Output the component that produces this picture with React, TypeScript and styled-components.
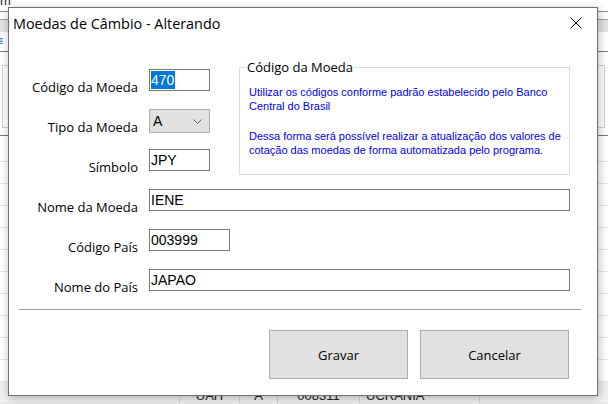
import React from 'react';
import styled, { createGlobalStyle } from 'styled-components';

const ui = '"Open Sans", "Noto Sans", "Liberation Sans", sans-serif';
const classic = '"Liberation Sans", Arial, sans-serif';

const GlobalStyle = createGlobalStyle`
  html, body {
    margin: 0;
    padding: 0;
  }
  body {
    width: 608px;
    height: 404px;
    overflow: hidden;
    background: #fff;
    font-family: ${ui};
  }
`;

const Desktop = styled.div`
  position: relative;
  width: 608px;
  height: 404px;
  overflow: hidden;
  background: #fff;
`;

/* ---------- the list window behind the dialog ---------- */

const BackWindow = styled.div`
  display: flex;
  flex-direction: column;
  height: 100%;
`;

const BackTitle = styled.div`
  height: 12px;
  border-bottom: 1px solid #8a8a8a;
  font: 13px ${classic};
  color: #222;
  line-height: 2px;
  text-indent: -34px;
  overflow: hidden;
`;

const BackMenu = styled.div`
  height: 8px;
  border-bottom: 1px solid #9a9a9a;
`;

const BackToolbar = styled.div`
  height: 31px;
  background: linear-gradient(#e3e3e3 0, #e3e3e3 12px, #fff 12px);
  border-bottom: 1px solid #7c7c7c;
  color: #1565c0;
  font: 12px ${classic};
  line-height: 42px;
  text-indent: -4px;
`;

const BackFilter = styled.div`
  height: 91px;
  border-bottom: 1px solid #7c7c7c;
  padding: 13px 3px 0 2px;
  box-sizing: border-box;
`;

const FilterBox = styled.div`
  height: 63px;
  border: 1px solid #d0d0d0;
  box-sizing: border-box;
`;

const GridHead = styled.div`
  height: 27px;
  border-bottom: 1px solid #e2e2e2;
`;

const GridRow = styled.div<{ $shade?: boolean }>`
  flex: none;
  height: 21px;
  border-bottom: 1px solid #e6e6e6;
  display: flex;
  background: ${(p) => (p.$shade ? '#f0f0f0' : '#fff')};
`;

const GridCell = styled.div<{ $w: number; $align?: string }>`
  width: ${(p) => p.$w}px;
  flex: none;
  box-sizing: border-box;
  border-right: 1px solid #d6d6d6;
  font: 13px ${classic};
  color: #222;
  line-height: 22px;
  padding-top: 3px;
  text-align: ${(p) => p.$align || 'left'};
  padding-left: 6px;
  padding-right: 6px;
`;

/* ---------- dialog ---------- */

const Dialog = styled.div`
  position: absolute;
  left: 8px;
  top: 7px;
  width: 590px;
  height: 389px;
  box-sizing: border-box;
  border: 1px solid #6f6f6f;
  background: #fff;
  box-shadow: 1px 2px 9px rgba(0, 0, 0, 0.28);
  display: flex;
  flex-direction: column;
`;

const TitleBar = styled.div`
  height: 30px;
  display: flex;
  align-items: center;
  justify-content: space-between;
  flex: none;
`;

const Title = styled.div`
  padding-left: 4px;
  font: 14.4px ${ui};
  color: #000;
`;

const CloseButton = styled.div`
  width: 42px;
  height: 30px;
  display: flex;
  align-items: center;
  justify-content: center;
`;

const Body = styled.div`
  padding: 22px 0 0 0;
  display: flex;
  flex-direction: column;
`;

const TopSection = styled.div`
  display: flex;
  align-items: flex-start;
`;

const FieldsCol = styled.div`
  width: 230px;
  padding-top: 9px;
  flex: none;
`;

const Row = styled.div`
  display: grid;
  grid-template-columns: 129px 1fr;
  column-gap: 11px;
  height: 40px;
  align-items: start;
`;

const Label = styled.div`
  text-align: right;
  font: 13px ${ui};
  line-height: 18px;
  padding-top: 9px;
  color: #000;
  white-space: nowrap;
`;

const TextBox = styled.div<{ $w: number }>`
  width: ${(p) => p.$w}px;
  height: 22px;
  box-sizing: border-box;
  border: 1px solid #7a7a7a;
  background: #fff;
  padding: 0 1px;
  font: 14px ${classic};
  line-height: 20px;
  color: #000;
  white-space: nowrap;
  overflow: hidden;
`;

const Selected = styled.span`
  display: inline-block;
  background: #0078d7;
  color: #fff;
  line-height: 18px;
  margin-top: 1px;
  padding-right: 1px;
  vertical-align: top;
`;

const Combo = styled.div`
  width: 61px;
  height: 24px;
  box-sizing: border-box;
  border: 1px solid #adadad;
  background: #e1e1e1;
  display: flex;
  align-items: center;
  justify-content: space-between;
  padding: 0 7px 0 3px;
  font: 14px ${classic};
  color: #000;
`;

const GroupBox = styled.fieldset`
  width: 331px;
  height: 115px;
  box-sizing: border-box;
  margin: 0;
  padding: 0 6px;
  border: 1px solid #dcdcdc;
  min-width: 0;
`;

const GroupLegend = styled.legend`
  padding: 0 1px;
  font: 13px ${ui};
  line-height: 14px;
  color: #000;
`;

const Hint = styled.p<{ $gap: number }>`
  margin: ${(p) => p.$gap}px 0 0 0;
  padding-left: 3px;
  font: 11px ${classic};
  line-height: 14px;
  color: #0000f0;
  white-space: nowrap;
`;

const Separator = styled.div`
  height: 1px;
  background: #a0a0a0;
  margin: 0 16px 0 10px;
`;

const ButtonBar = styled.div`
  display: flex;
  justify-content: flex-end;
  gap: 12px;
  padding: 20px 28px 0 0;
`;

const Button = styled.div<{ $w: number }>`
  width: ${(p) => p.$w}px;
  height: 49px;
  box-sizing: border-box;
  border: 1px solid #adadad;
  background: #e1e1e1;
  display: flex;
  align-items: center;
  justify-content: center;
  font: 13px ${ui};
  color: #000;
`;

const backRows = Array.from({ length: 10 });

export default function App() {
  return (
    <>
      <GlobalStyle />
      <Desktop>
        <BackWindow>
          <BackTitle>Custom</BackTitle>
          <BackMenu />
          <BackToolbar>≡</BackToolbar>
          <BackFilter>
            <FilterBox />
          </BackFilter>
          <GridHead />
          {backRows.map((_, i) => (
            <GridRow key={i} />
          ))}
          <GridRow $shade>
            <GridCell $w={180} />
            <GridCell $w={60} $align="center">UAH</GridCell>
            <GridCell $w={38} $align="center">A</GridCell>
            <GridCell $w={82} $align="center">008311</GridCell>
            <GridCell $w={120}>UCRANIA</GridCell>
          </GridRow>
        </BackWindow>

        <Dialog>
          <TitleBar>
            <Title>Moedas de Câmbio - Alterando</Title>
            <CloseButton>
              <svg width="12" height="12" viewBox="0 0 12 12">
                <path d="M0.5 0.5 L11.5 11.5 M11.5 0.5 L0.5 11.5" stroke="#000" strokeWidth="1" fill="none" />
              </svg>
            </CloseButton>
          </TitleBar>

          <Body>
            <TopSection>
              <FieldsCol>
                <Row>
                  <Label>Código da Moeda</Label>
                  <TextBox $w={61}>
                    <Selected>470</Selected>
                  </TextBox>
                </Row>
                <Row>
                  <Label>Tipo da Moeda</Label>
                  <Combo>
                    <span>A</span>
                    <svg width="9" height="5" viewBox="0 0 9 5">
                      <path d="M0.5 0.5 L4.5 4.5 L8.5 0.5" stroke="#606060" strokeWidth="1" fill="none" />
                    </svg>
                  </Combo>
                </Row>
                <Row>
                  <Label>Símbolo</Label>
                  <TextBox $w={61}>JPY</TextBox>
                </Row>
              </FieldsCol>

              <GroupBox>
                <GroupLegend>Código da Moeda</GroupLegend>
                <Hint $gap={11}>
                  Utilizar os códigos conforme padrão estabelecido pelo Banco
                  <br />
                  Central do Brasil
                </Hint>
                <Hint $gap={16}>
                  Dessa forma será possível realizar a atualização dos valores de
                  <br />
                  cotação das moedas de forma automatizada pelo programa.
                </Hint>
              </GroupBox>
            </TopSection>

            <Row>
              <Label>Nome da Moeda</Label>
              <TextBox $w={421}>IENE</TextBox>
            </Row>
            <Row>
              <Label>Código País</Label>
              <TextBox $w={81}>003999</TextBox>
            </Row>
            <Row>
              <Label>Nome do País</Label>
              <TextBox $w={421}>JAPAO</TextBox>
            </Row>

            <Separator />

            <ButtonBar>
              <Button $w={139}>Gravar</Button>
              <Button $w={149}>Cancelar</Button>
            </ButtonBar>
          </Body>
        </Dialog>
      </Desktop>
    </>
  );
}
